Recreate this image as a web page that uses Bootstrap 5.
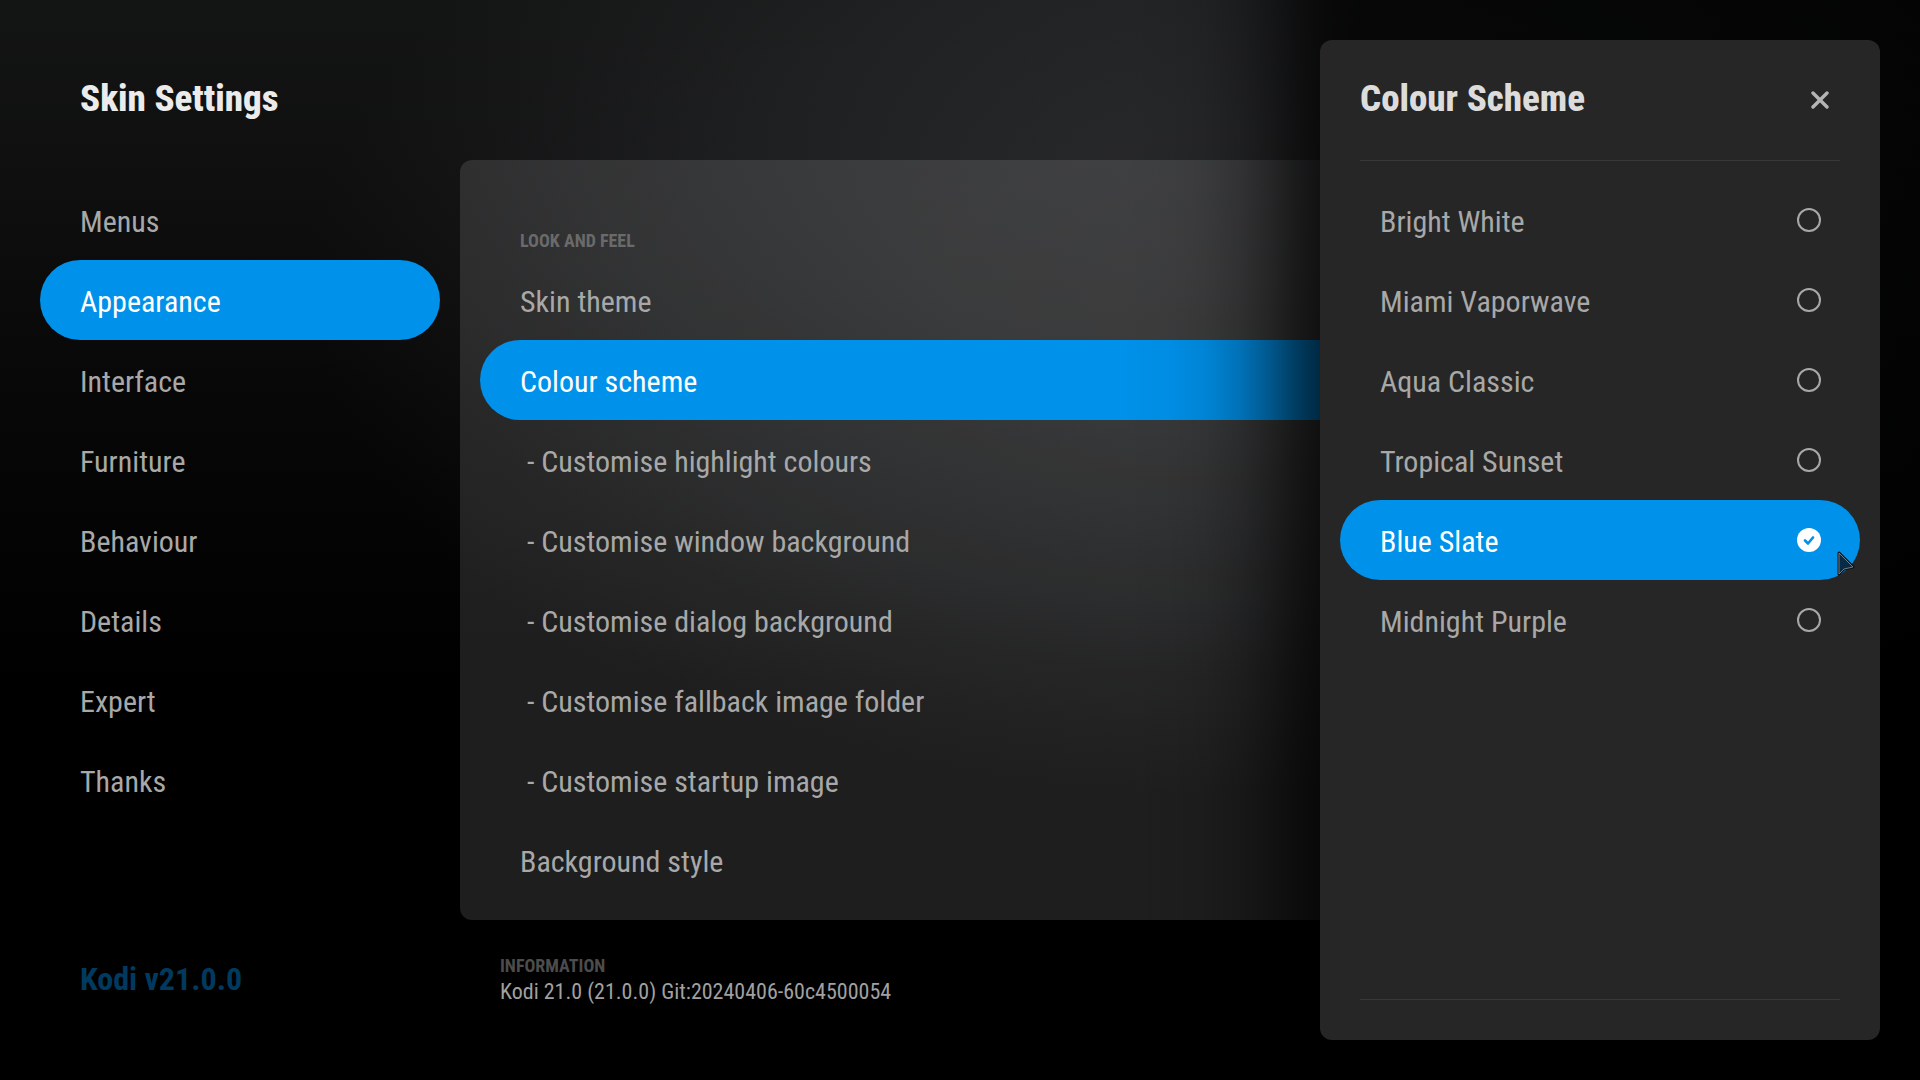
<!DOCTYPE html>
<html lang="en">
<head>
<meta charset="utf-8">
<meta name="viewport" content="width=device-width, initial-scale=1">
<title>Skin Settings</title>
<link href="https://cdn.jsdelivr.net/npm/bootstrap@5.3.0/dist/css/bootstrap.min.css" rel="stylesheet">
<style>
:root { --accent: #0091ea; --rule: #373838; }
body {
  font-family: "Roboto Condensed", Roboto, sans-serif;
  font-size: 30px; line-height: 40px; color: #a8a8a8; background: #000;
}
.screen {
  padding: 40px 40px 74px;
  background-image:
    radial-gradient(ellipse 920px 530px at 64% 280px, #1b1b1c 0, #171819 30%, #0e0f10 60%, #050505 85%, #000 100%),
    linear-gradient(#131414, #101011 150px, #070707 400px, #000 680px);
  background-blend-mode: screen;
}
.body-row { gap: 20px; }
.sidebar { width: 400px; }
.heading { font-size: 37px; line-height: 40px; font-weight: 800; color: #ebebeb; }
.screen-top { height: 140px; padding: 39px 40px 0; }
.row-item {
  display: flex; align-items: center; width: 100%; height: 80px;
  padding: 4px 40px 0; border: 0; border-radius: 40px; background: transparent;
  color: inherit; text-align: left; text-decoration: none; white-space: pre;
}
.row-item.active, .row-item:has(input:checked) { background: var(--accent); color: #fff; }
.version { padding: 0 40px 7px; font-size: 32px; font-weight: 700; color: #003a5f; }
.settings { margin-top: 120px; padding: 20px; border-radius: 12px; background: rgba(255,255,255,.118); }
.caps { font-size: 18px; line-height: 24px; font-weight: 700; text-transform: uppercase; color: #6a6a6a; }
.settings .caps { height: 80px; padding: 49px 40px 0; }
.info { margin-top: 34px; padding: 0 40px; }
.info .caps { color: #4c4c4c; }
.info-text { font-size: 22px; line-height: 28px; color: #a0a0a0; }
.shade {
  position: absolute; inset: 0 0 0 auto; width: 800px;
  background: linear-gradient(90deg, transparent 0, rgba(0,0,0,.03) 50px, rgba(0,0,0,.09) 85px, rgba(0,0,0,.22) 120px, rgba(0,0,0,.4) 150px, rgba(0,0,0,.58) 175px, rgba(0,0,0,.75) 205px, rgba(0,0,0,.82) 240px);
}
.scheme-dialog { position: absolute; inset: 40px 40px 40px auto; width: 560px; border-radius: 12px; background: #262626; }
.dialog-top { height: 121px; margin: 0 40px; padding-bottom: 2px; border-bottom: 1px solid var(--rule); }
.dialog-top .heading { color: #dcdcdc; }
.close-btn { padding: 10px; border: 0; background: none; line-height: 0; color: #b4b4b4; }
.options { padding: 19px 20px; }
.options .row-item { justify-content: space-between; padding-right: 39px; }
.options input { appearance: none; width: 24px; height: 24px; margin: -4px 0 0; border: 2px solid #a8a8a8; border-radius: 50%; }
.options input:checked {
  border: 0;
  background: #fff url("data:image/svg+xml,%3Csvg xmlns='http://www.w3.org/2000/svg' viewBox='0 0 24 24'%3E%3Cpath d='M8 12.500l3 3 5-6' fill='none' stroke='%230091ea' stroke-width='2.6' stroke-linecap='round' stroke-linejoin='round'/%3E%3C/svg%3E");
}
.dialog-foot { margin: auto 40px 40px; border-top: 1px solid var(--rule); }
.pointer { position: absolute; right: 25px; top: 511px; pointer-events: none; }
</style>
</head>
<body>
<div class="screen position-relative d-flex flex-column min-vh-100 overflow-hidden">
  <div class="body-row d-flex flex-grow-1">
    <div class="sidebar d-flex flex-column flex-shrink-0">
      <header class="screen-top"><h1 class="heading m-0">Skin Settings</h1></header>
      <nav class="flex-grow-1" aria-label="Settings sections">
        <a class="row-item" href="#">Menus</a>
        <a class="row-item active" href="#" aria-current="page">Appearance</a>
        <a class="row-item" href="#">Interface</a>
        <a class="row-item" href="#">Furniture</a>
        <a class="row-item" href="#">Behaviour</a>
        <a class="row-item" href="#">Details</a>
        <a class="row-item" href="#">Expert</a>
        <a class="row-item" href="#">Thanks</a>
      </nav>
      <div class="version">Kodi v21.0.0</div>
    </div>
    <main class="flex-grow-1">
      <section class="settings">
        <h2 class="caps m-0">Look and feel</h2>
        <button type="button" class="row-item">Skin theme</button>
        <button type="button" class="row-item active">Colour scheme</button>
        <button type="button" class="row-item"> - Customise highlight colours</button>
        <button type="button" class="row-item"> - Customise window background</button>
        <button type="button" class="row-item"> - Customise dialog background</button>
        <button type="button" class="row-item"> - Customise fallback image folder</button>
        <button type="button" class="row-item"> - Customise startup image</button>
        <button type="button" class="row-item">Background style</button>
      </section>
      <section class="info">
        <h2 class="caps m-0">Information</h2>
        <p class="info-text m-0">Kodi 21.0 (21.0.0) Git:20240406-60c4500054</p>
      </section>
    </main>
  </div>

  <div class="shade"></div>
  <div class="scheme-dialog d-flex flex-column" role="dialog" aria-labelledby="scheme-title">
    <div class="dialog-top d-flex align-items-center justify-content-between">
      <h2 class="heading m-0" id="scheme-title">Colour Scheme</h2>
      <button type="button" class="close-btn" aria-label="Close">
        <svg width="20" height="20" viewBox="0 0 20 20" fill="none" stroke="currentColor" stroke-width="3.4" stroke-linecap="round"><path d="M3 4l14 14M17 4L3 18"/></svg>
      </button>
    </div>
    <div class="options">
      <label class="row-item">Bright White<input type="radio" name="scheme"></label>
      <label class="row-item">Miami Vaporwave<input type="radio" name="scheme"></label>
      <label class="row-item">Aqua Classic<input type="radio" name="scheme"></label>
      <label class="row-item">Tropical Sunset<input type="radio" name="scheme"></label>
      <label class="row-item">Blue Slate<input type="radio" name="scheme" checked></label>
      <label class="row-item">Midnight Purple<input type="radio" name="scheme"></label>
    </div>
    <div class="dialog-foot"></div>
    <svg class="pointer" width="18" height="26" viewBox="0 0 18 26"><path d="M2 2v21l5-5 9-2z" fill="#062b47" stroke="#111" stroke-width="3" stroke-linejoin="round"/><path d="M2 2v21l5-5 9-2z" fill="#062b47" stroke="#6d7f8c" stroke-width="1"/></svg>
  </div>
</div>
<script src="https://cdn.jsdelivr.net/npm/bootstrap@5.3.0/dist/js/bootstrap.bundle.min.js"></script>
</body>
</html>
